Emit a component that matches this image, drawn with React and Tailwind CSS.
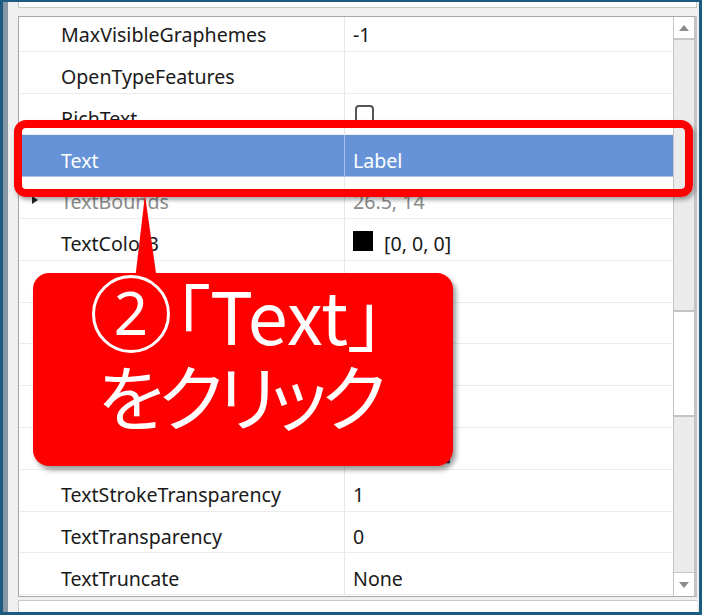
import React from 'react';

const rows = [
  { name: 'MaxVisibleGraphemes', value: '-1' },
  { name: 'OpenTypeFeatures', value: '' },
  { name: 'RichText', check: true },
  { name: 'Text', value: 'Label', selected: true },
  { name: 'TextBounds', value: '26.5, 14', muted: true, expand: true },
  { name: 'TextColor3', value: '[0, 0, 0]', swatch: true },
  { name: 'TextDirection', value: 'Auto' },
  { name: 'TextFits', check: true },
  { name: 'TextScaled', check: true },
  { name: 'TextSize', value: '14' },
  { name: 'TextStrokeColor3', value: '[0, 0, 0]', swatch: true },
  { name: 'TextStrokeTransparency', value: '1' },
  { name: 'TextTransparency', value: '0' },
  { name: 'TextTruncate', value: 'None' },
];

const Row = ({ row }) => {
  const sel = row.selected;
  return (
    <div
      className={`flex h-[41.8px] shrink-0 border-b ${
        sel ? 'bg-[#6693d7] border-[#a9c4ec] text-white' : 'border-[#ececec] text-[#1a1a1a]'
      }`}
    >
      <div
        className={`relative flex w-[326px] items-center pl-[42px] pt-[9px] border-r ${
          sel ? 'border-[#a9c4ec]' : 'border-[#e6e6e6]'
        } ${row.muted ? 'text-[#8c8c8c]' : ''}`}
      >
        {row.expand && (
          <svg className="absolute left-[13px] top-[19px]" width="6" height="8" viewBox="0 0 6 8">
            <path d="M0 0 L6 4 L0 8 Z" fill="#222" />
          </svg>
        )}
        {row.name}
      </div>
      <div className={`flex flex-1 items-center gap-[11px] pl-[8px] pt-[9px] ${row.muted ? 'text-[#8c8c8c]' : ''}`}>
        {row.check && (
          <div className="ml-[2px] -mt-[7px] h-[19px] w-[19px] rounded-[4px] border-2 border-[#555] bg-white" />
        )}
        {row.swatch && <div className="-mt-[6px] h-[20px] w-[20px] bg-black" />}
        {row.value}
      </div>
    </div>
  );
};

export default function App() {
  return (
    <div className="relative h-[615px] w-[702px] overflow-hidden bg-[#1d5a80] pt-[2px] pr-[3px] pb-[3px] pl-[3px] font-['Noto_Sans',sans-serif] text-[19.6px]">
      <div className="flex h-full">
        {/* window behind */}
        <div className="w-[5px] bg-[#8797a6]" />
        <div className="flex flex-1 flex-col bg-[#f0f0f0] pl-[10px] pr-[2px]">
          <div className="h-[6px] shrink-0 border-x border-b border-[#c8c8c8] bg-white" />
          <div className="h-[8px] shrink-0" />
          {/* properties panel */}
          <div className="flex h-[581px] shrink-0 border-y border-l border-r-[3px] border-y-[#a8a8a8] border-l-[#a8a8a8] border-r-[#c4c4c4] bg-white">
            <div className="flex flex-1 flex-col overflow-hidden">
              <div className="-mt-[7px] flex flex-col">
                {rows.map((r) => (
                  <Row key={r.name} row={r} />
                ))}
              </div>
            </div>
            {/* scrollbar */}
            <div className="flex w-[21px] flex-col border-l border-[#c4c4c4] bg-[#ebebeb]">
              <div className="flex h-[23px] items-center justify-center border-b-2 border-[#c8c8c8] bg-white">
                <svg width="10" height="6" viewBox="0 0 10 6">
                  <path d="M0 6 L5 0 L10 6 Z" fill="#8a8a8a" />
                </svg>
              </div>
              <div className="flex flex-1 flex-col">
                <div className="h-[270px]" />
                <div className="h-[107px] border-y-2 border-[#c4c4c4] bg-white" />
                <div className="flex-1" />
              </div>
              <div className="flex h-[24px] items-center justify-center border-t border-[#c8c8c8] bg-white">
                <svg width="10" height="6" viewBox="0 0 10 6">
                  <path d="M0 0 L5 6 L10 0 Z" fill="#8a8a8a" />
                </svg>
              </div>
            </div>
          </div>
          <div className="h-[3px] shrink-0" />
          <div className="flex-1 border-t border-l border-[#c8c8c8] bg-white" />
        </div>
      </div>

      {/* annotation: highlight outline */}
      <div className="absolute left-[14px] top-[120px] h-[77px] w-[679px] rounded-[12px] border-[8px] border-[#ff0000] shadow-[2px_3px_4px_rgba(0,0,0,0.35)]" />

      {/* annotation: pointer */}
      <svg className="absolute left-[130px] top-[190px]" width="32" height="90" viewBox="0 0 32 90">
        <path d="M15 5 L27 90 L5 90 Z" fill="#ff0000" />
      </svg>

      {/* annotation: callout */}
      <div className="absolute left-[33px] top-[273px] flex h-[193px] w-[420px] flex-col items-center justify-center rounded-[16px] bg-[#ff0000] pb-[32px] font-['Noto_Sans_CJK_JP',sans-serif] text-[72px] leading-[80px] text-white shadow-[3px_4px_5px_rgba(0,0,0,0.4)] [font-feature-settings:'palt']">
        <div className="-ml-[10px] flex items-center">
          <span className="mr-[4px] inline-flex h-[78px] w-[78px] items-center justify-center rounded-full border-[3px] border-white pb-[4px] font-['Noto_Sans',sans-serif] text-[60px] leading-none">
            2
          </span>
          <span>「Text」</span>
        </div>
        <div className="-ml-[8px] tracking-[-0.08em]">をクリック</div>
      </div>
    </div>
  );
}
